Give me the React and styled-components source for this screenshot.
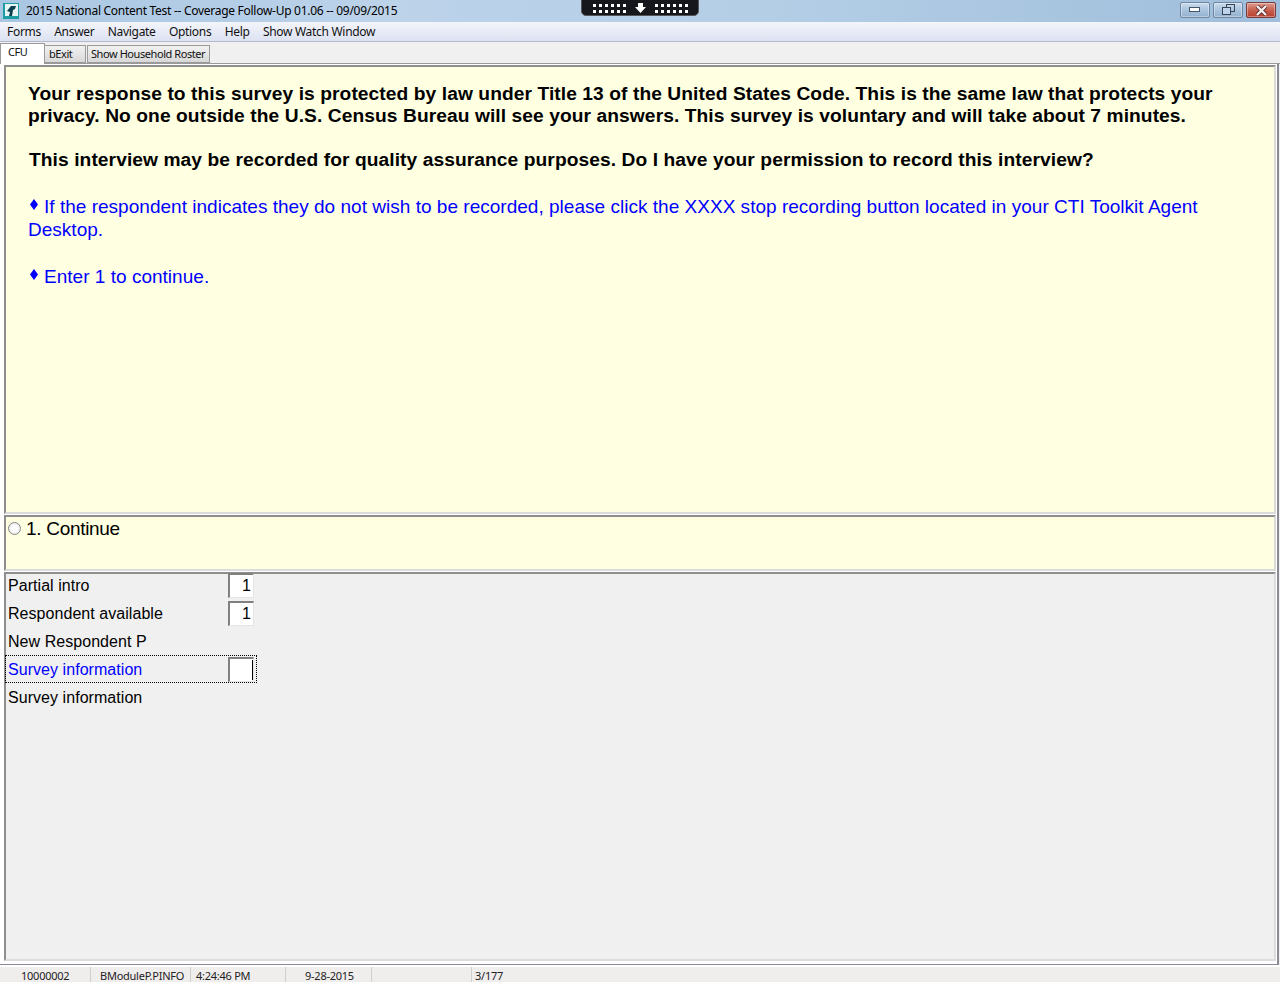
import React from 'react'
import styled, { createGlobalStyle } from 'styled-components'

const GlobalStyle = createGlobalStyle`
    html, body {
        margin: 0;
        padding: 0;
        background: #f0f0f0;
    }
    body {
        font-family: "Liberation Sans", Arial, sans-serif;
    }
`

const Win = styled.div`
    position: relative;
    width: 1280px;
    height: 982px;
    overflow: hidden;
    display: flex;
    flex-direction: column;
    background: #f0f0f0;
`

const TitleBar = styled.div`
    height: 22px;
    flex: none;
    display: flex;
    align-items: center;
    padding: 0 4px 0 3px;
    background: linear-gradient(90deg, #a9c6e2 0%, #bcd3ea 30%, #b4cee6 60%, #9fbedb 100%);
`

const AppIcon = styled.svg`
    width: 16px;
    height: 16px;
    flex: none;
    margin-right: 7px;
`

const TitleText = styled.span`
    font-family: "Noto Sans", sans-serif;
    font-size: 12px;
    letter-spacing: -0.28px;
    font-variant-ligatures: none;
    color: #000;
    white-space: nowrap;
    flex: 1;
    margin-top: -1px;
`

const WinButtons = styled.div`
    display: flex;
    gap: 3px;
    align-self: flex-start;
    margin-top: 2px;
`

const WinButton = styled.div`
    width: 30px;
    height: 16px;
    box-sizing: border-box;
    border: 1px solid ${p => (p.$close ? '#7a3a3a' : '#6f87a3')};
    border-radius: 2px;
    display: flex;
    align-items: center;
    justify-content: center;
    background: ${p => (p.$close
        ? 'linear-gradient(#dc9c90 0%, #c9604f 50%, #b8402f 100%)'
        : 'linear-gradient(#c9dcee 0%, #aac4dd 50%, #93b1cf 100%)')};
    box-shadow: inset 0 0 0 1px rgba(255, 255, 255, .35);
`

const RemoteBar = styled.div`
    position: absolute;
    top: -3px;
    left: 581px;
    width: 118px;
    height: 19px;
    box-sizing: border-box;
    background: #15171c;
    border: 1px solid #555;
    border-radius: 0 0 5px 5px;
    display: flex;
    align-items: center;
    justify-content: center;
    gap: 9px;
    padding-top: 3px;
`

const Dots = styled.div`
    display: grid;
    grid-template-columns: repeat(6, 3px);
    grid-template-rows: repeat(2, 3px);
    gap: 3px;
`

const Dot = styled.i`
    display: block;
    background: #fff;
`

const MenuBar = styled.div`
    height: 19px;
    flex: none;
    display: flex;
    align-items: center;
    gap: 13.3px;
    padding: 0 7px;
    background: linear-gradient(#f3f5fb, #dde2f2);
    border-bottom: 1px solid #b4bccb;
`

const MenuItem = styled.span`
    font-family: "Noto Sans", sans-serif;
    font-size: 12px;
    letter-spacing: -0.3px;
    color: #111;
`

const TabStrip = styled.div`
    height: 22px;
    flex: none;
    display: flex;
    align-items: flex-end;
    padding-top: 1px;
    box-sizing: border-box;
    background: #f0f0f0;
    border-bottom: 1px solid #9a9a9a;
`

const Tab = styled.div`
    box-sizing: border-box;
    font-family: "Noto Sans", sans-serif;
    font-size: 11px;
    letter-spacing: -0.43px;
    color: #111;
    width: ${p => p.$width}px;
    height: ${p => (p.$active ? '21px' : '18px')};
    padding: ${p => (p.$active ? '0 0 6px 7px' : `0 0 2px ${p.$plain ? 4 : 3}px`)};
    margin-bottom: ${p => (p.$active ? '-1px' : '0')};
    margin-right: ${p => (p.$active ? '0' : '1px')};
    display: flex;
    align-items: center;
    white-space: nowrap;
    background: ${p => (p.$active ? '#fff' : 'linear-gradient(#f2f2f2, #d8d8d8)')};
    border: 1px solid #9a9a9a;
    border-left: ${p => (p.$plain ? 'none' : '1px solid #9a9a9a')};
    border-bottom: ${p => (p.$active ? 'none' : '1px solid #9a9a9a')};
`

const Frame = styled.div`
    flex: 1;
    min-height: 0;
    display: flex;
    flex-direction: column;
    gap: 1px;
    margin-right: 1px;
    padding: 1px 1px 3px 4px;
    border-right: 2px solid #8c8c96;
    border-bottom: 1px solid #8c8c96;
    background: #fff;
`

const Panel = styled.div`
    box-sizing: border-box;
    flex: ${p => (p.$height ? 'none' : '1')};
    height: ${p => (p.$height ? `${p.$height}px` : 'auto')};
    background: ${p => p.$bg};
    border: 2px solid #8e8e8e;
    border-right-color: #dcdcdc;
    border-bottom-color: #dcdcdc;
`

const Prompt = styled.div`
    padding: 16px 20px 0 22px;
    font-size: 19px;
`

const BoldLine = styled.p`
    margin: 0;
    font-size: 19.2px;
    font-weight: 700;
    line-height: 22px;
    letter-spacing: 0.08px;
    color: #000;
    margin-bottom: ${p => p.$after || 0}px;
    padding-left: ${p => p.$indent || 0}px;
`

const BlueLine = styled.p`
    margin: 0;
    line-height: 23px;
    letter-spacing: 0.02px;
    color: #0000ff;
    margin-bottom: ${p => p.$after || 0}px;
`

const Bullet = styled.svg`
    width: 8px;
    height: 11px;
    margin: 0 6px 6px 2px;
    vertical-align: middle;
`

const ChoiceRow = styled.div`
    display: flex;
    align-items: center;
    height: 22px;
    padding: 1px 0 0 2px;
    font-size: 19px;
    letter-spacing: -0.3px;
    color: #000;
`

const Radio = styled.span`
    width: 13px;
    height: 13px;
    box-sizing: border-box;
    border: 1px solid #8a8a8a;
    border-radius: 50%;
    background: radial-gradient(#fff 35%, #d8d8d8);
    margin-right: 5px;
    margin-bottom: 2px;
`

const Fields = styled.div`
    display: flex;
    flex-direction: column;
    margin-top: -3px;
`

const FieldRow = styled.div`
    box-sizing: border-box;
    width: 252px;
    height: 28px;
    margin-left: -1px;
    padding: 2px 0 0 3px;
    display: flex;
    align-items: center;
    justify-content: space-between;
    font-size: 16px;
    letter-spacing: 0.05px;
    color: ${p => (p.$current ? '#0000ff' : '#000')};
    outline: ${p => (p.$current ? '1px dotted #000' : 'none')};
    outline-offset: -1px;
`

const FieldBox = styled.div`
    box-sizing: border-box;
    width: 26px;
    height: 25px;
    margin: -2px 3px 0 0;
    padding-right: 2px;
    display: flex;
    align-items: center;
    justify-content: flex-end;
    background: #fff;
    border: 2px solid #808080;
    border-right: 1px solid #e4e4e4;
    border-bottom: 1px solid #e4e4e4;
    font-size: 16px;
    color: #000;
`

const Caret = styled.span`
    width: 1px;
    height: 20px;
    background: #000;
    margin-right: -2px;
`

const StatusBar = styled.div`
    flex: none;
    height: 15px;
    display: flex;
    background: #f0eded;
    border-top: 2px solid #fff;
`

const StatusCell = styled.div`
    box-sizing: border-box;
    flex: ${p => (p.$width ? 'none' : '1')};
    width: ${p => (p.$width ? `${p.$width}px` : 'auto')};
    padding-left: ${p => p.$pad || 0}px;
    padding-top: 1px;
    font-family: "Noto Sans", sans-serif;
    font-size: 11px;
    letter-spacing: -0.25px;
    color: #222;
    white-space: nowrap;
    border-right: ${p => (p.$last ? 'none' : '1px solid #d0cece')};
`

const dots = Array.from({ length: 12 })

function DotGroup() {
    return (
        <Dots>
            {dots.map((_, i) => <Dot key={i} />)}
        </Dots>
    )
}

function Diamond() {
    return (
        <Bullet viewBox="0 0 8 11">
            <polygon points="4,0 8,5.5 4,11 0,5.5" fill="#0000ff" />
        </Bullet>
    )
}

function App() {
    return (
        <Win>
            <GlobalStyle />
            <TitleBar>
                <AppIcon viewBox="0 0 16 16">
                    <rect x="0" y="0" width="16" height="16" fill="#1c9ea3" />
                    <rect x="2" y="1" width="13" height="12" fill="#e6f5f4" />
                    <path d="M4 8 L8 3 L13 3 L12 6 L10 7 L9 13 L6 13 L7 9 Z" fill="#0b3f4d" />
                </AppIcon>
                <TitleText>2015 National Content Test -- Coverage Follow-Up 01.06 -- 09/09/2015</TitleText>
                <WinButtons>
                    <WinButton>
                        <svg width="12" height="6" viewBox="0 0 12 6">
                            <rect x="0.5" y="0.5" width="10" height="4" fill="#fff" stroke="#44546a" />
                        </svg>
                    </WinButton>
                    <WinButton>
                        <svg width="13" height="12" viewBox="0 0 13 12">
                            <rect x="4.5" y="0.5" width="8" height="7" fill="none" stroke="#3a4656" />
                            <rect x="0.5" y="3.5" width="8" height="7" fill="#bcd3ea" stroke="#3a4656" />
                        </svg>
                    </WinButton>
                    <WinButton $close>
                        <svg width="13" height="11" viewBox="0 0 13 11">
                            <path d="M2 1 L11 10 M11 1 L2 10" stroke="#5a2a2a" strokeWidth="4" />
                            <path d="M2 1 L11 10 M11 1 L2 10" stroke="#f4f0f0" strokeWidth="2.4" />
                        </svg>
                    </WinButton>
                </WinButtons>
            </TitleBar>
            <RemoteBar>
                <DotGroup />
                <svg width="11" height="10" viewBox="0 0 11 10">
                    <path d="M3 0 H8 V4 H11 L5.5 10 L0 4 H3 Z" fill="#fff" />
                </svg>
                <DotGroup />
            </RemoteBar>
            <MenuBar>
                <MenuItem>Forms</MenuItem>
                <MenuItem>Answer</MenuItem>
                <MenuItem>Navigate</MenuItem>
                <MenuItem>Options</MenuItem>
                <MenuItem>Help</MenuItem>
                <MenuItem>Show Watch Window</MenuItem>
            </MenuBar>
            <TabStrip>
                <Tab $active $width={45}>CFU</Tab>
                <Tab $plain $width={41}>bExit</Tab>
                <Tab $width={123}>Show Household Roster</Tab>
            </TabStrip>
            <Frame>
                <Panel $height={449} $bg="#ffffe1">
                    <Prompt>
                        <BoldLine $after={22}>
                            Your response to this survey is protected by law under Title 13 of the United States Code. This is the same law that protects your privacy. No one outside the U.S. Census Bureau will see your answers. This survey is voluntary and will take about 7 minutes.
                        </BoldLine>
                        <BoldLine $after={24} $indent={1}>
                            This interview may be recorded for quality assurance purposes. Do I have your permission to record this interview?
                        </BoldLine>
                        <BlueLine $after={24}>
                            <Diamond />If the respondent indicates they do not wish to be recorded, please click the XXXX stop recording button located in your CTI Toolkit Agent Desktop.
                        </BlueLine>
                        <BlueLine>
                            <Diamond />Enter 1 to continue.
                        </BlueLine>
                    </Prompt>
                </Panel>
                <Panel $height={56} $bg="#ffffe1">
                    <ChoiceRow>
                        <Radio />1. Continue
                    </ChoiceRow>
                </Panel>
                <Panel $bg="#f0f0f0">
                    <Fields>
                        <FieldRow>Partial intro<FieldBox>1</FieldBox></FieldRow>
                        <FieldRow>Respondent available<FieldBox>1</FieldBox></FieldRow>
                        <FieldRow>New Respondent P</FieldRow>
                        <FieldRow $current>Survey information<FieldBox><Caret /></FieldBox></FieldRow>
                        <FieldRow>Survey information</FieldRow>
                    </Fields>
                </Panel>
            </Frame>
            <StatusBar>
                <StatusCell $width={91} $pad={21}>10000002</StatusCell>
                <StatusCell $width={100} $pad={9}>BModuleP.PINFO</StatusCell>
                <StatusCell $width={95} $pad={5}>4:24:46 PM</StatusCell>
                <StatusCell $width={86} $pad={19}>9-28-2015</StatusCell>
                <StatusCell $width={100} />
                <StatusCell $pad={3} $last>3/177</StatusCell>
            </StatusBar>
        </Win>
    )
}

export default App
